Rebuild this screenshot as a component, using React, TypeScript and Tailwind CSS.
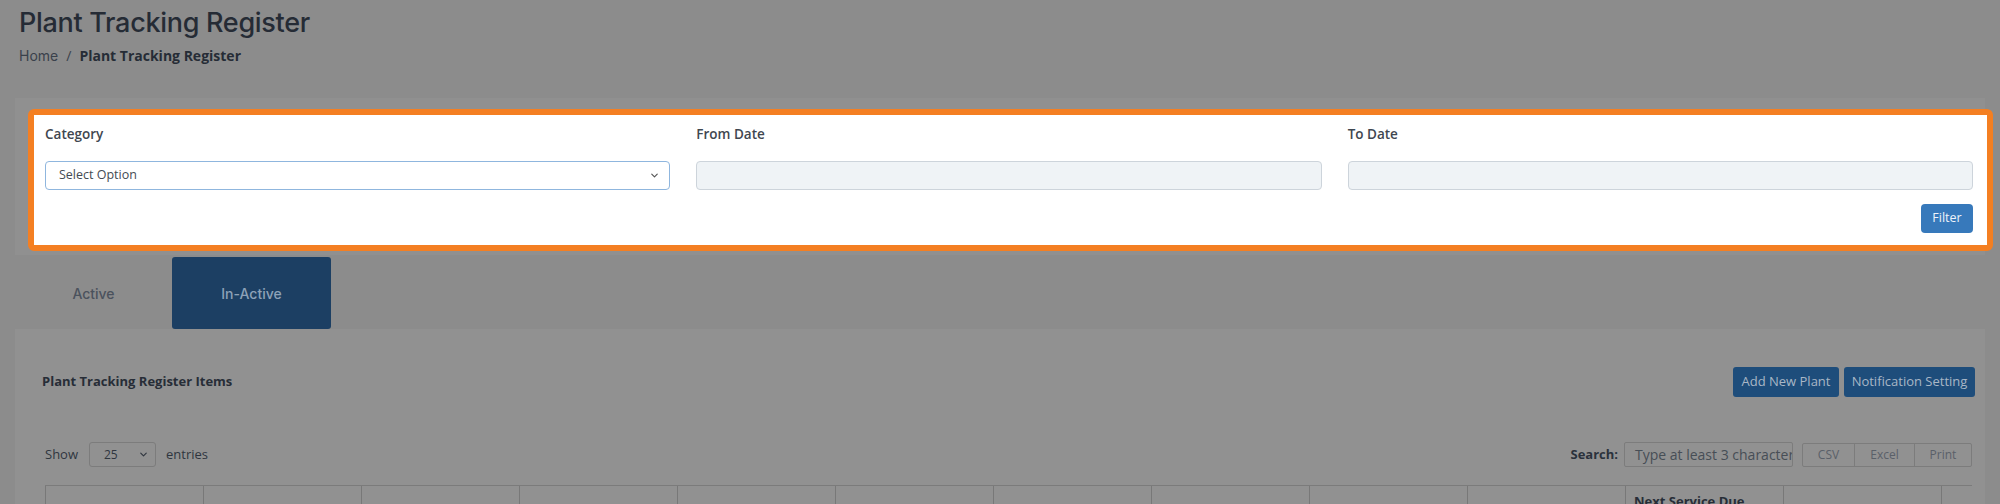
import { ChevronDown } from 'lucide-react'

const columns = ['', '', '', '', '', '', '', '', '', '', 'Next Service Due', '', '']

const FilterField = ({ label, children }: { label: string; children: React.ReactNode }) => (
  <div className="flex flex-col gap-[18px]">
    <label className="text-[13.5px] leading-[18px] font-semibold text-[#3f4750]">{label}</label>
    {children}
  </div>
)

const App = () => {
  return (
    <div className="w-full h-[504px] overflow-hidden bg-[#8c8c8c] font-['Open_Sans',sans-serif]">
      {/* page header */}
      <div className="pl-[19px] pt-[7px]">
        <h1 className="font-['Inter',sans-serif] text-[27px] leading-[32px] font-medium tracking-[-0.3px] text-[#252b35]">
          Plant Tracking Register
        </h1>
        <div className="mt-[8px] flex items-center text-[14px] leading-[18px] text-[#2e343d]">
          <span className="font-['Inter',sans-serif] text-[#3a414b]">Home</span>
          <span className="mx-[8px] text-[#3a414b]">/</span>
          <span className="font-bold text-[#262c36]">Plant Tracking Register</span>
        </div>
      </div>

      {/* filter card (highlighted) */}
      <div className="mt-[33px] ml-[15px] mr-[15px] bg-[#909090] pt-[11px] pb-[4px] pl-[13px]">
        <div className="mr-[-8px] border-[6px] border-[#f47f22] rounded-[6px] bg-white pt-[10px] pb-[12px] pl-[11px] pr-[14px]">
          <div className="grid grid-cols-3 gap-[26px]">
            <FilterField label="Category">
              <div className="h-[29px] flex items-center justify-between rounded-[4px] border border-[#8fb6de] pl-[13px] pr-[9px] text-[12.5px] text-[#444b53]">
                <span>Select Option</span>
                <ChevronDown size={11} strokeWidth={2.5} className="text-[#555]" />
              </div>
            </FilterField>
            <FilterField label="From Date">
              <div className="h-[29px] rounded-[4px] border border-[#cdd4db] bg-[#eff3f6]" />
            </FilterField>
            <FilterField label="To Date">
              <div className="h-[29px] rounded-[4px] border border-[#cdd4db] bg-[#eff3f6]" />
            </FilterField>
          </div>
          <div className="mt-[14px] flex justify-end">
            <button className="h-[29px] w-[52px] rounded-[4px] bg-[#3779bb] text-[12.5px] text-[#eef4fa]">Filter</button>
          </div>
        </div>
      </div>

      {/* tabs */}
      <div className="mt-[2px] ml-[15px] flex h-[72px] font-['Inter',sans-serif] text-[14px] font-medium">
        <div className="w-[157px] flex items-center justify-center text-[#4b525d]">Active</div>
        <div className="w-[159px] flex items-center justify-center rounded-[3px] bg-[#1c3f63] text-[#8da2b8]">In-Active</div>
      </div>

      {/* table card */}
      <div className="mx-[15px] bg-[#919191] pt-[38px]">
        <div className="flex items-center justify-between pl-[27px] pr-[10px] h-[30px]">
          <div className="text-[13px] font-bold text-[#272d37]">Plant Tracking Register Items</div>
          <div className="flex gap-[5px] text-[13px]">
            <button className="h-[30px] w-[106px] rounded-[3px] bg-[#1e4d7b] text-[#a9b7c6]">Add New Plant</button>
            <button className="h-[30px] w-[131px] rounded-[3px] bg-[#1e4d7b] text-[#a9b7c6]">Notification Setting</button>
          </div>
        </div>

        <div className="mt-[45px] flex items-center justify-between pl-[30px] pr-[13px] text-[13px] text-[#2f363f]">
          <div className="flex items-center">
            <span>Show</span>
            <div className="ml-[11px] h-[25px] w-[67px] flex items-center justify-between rounded-[3px] border border-[#7c7c7c] pl-[14px] pr-[6px] text-[12px]">
              <span>25</span>
              <ChevronDown size={11} strokeWidth={2.5} />
            </div>
            <span className="ml-[10px]">entries</span>
          </div>
          <div className="flex items-center">
            <span className="font-bold text-[#2b323c]">Search:</span>
            <div className="ml-[6px] h-[25px] w-[169px] overflow-hidden whitespace-nowrap flex items-center rounded-[2px] border border-[#7c7c7c] pl-[10px] text-[14px] text-[#474e56]">
              Type at least 3 characters
            </div>
            <div className="ml-[9px] flex h-[24px] rounded-[2px] border border-[#7c7c7c] text-[12px] text-[#5a6069]">
              <div className="w-[52px] flex items-center justify-center border-r border-[#7c7c7c]">CSV</div>
              <div className="w-[60px] flex items-center justify-center border-r border-[#7c7c7c]">Excel</div>
              <div className="w-[56px] flex items-center justify-center">Print</div>
            </div>
          </div>
        </div>

        <div className="mt-[18px] ml-[30px] w-[1927px] overflow-hidden">
          <div className="flex border-t border-[#7b7b7b]">
            {columns.map((c, i) => (
              <div
                key={i}
                className="w-[158px] shrink-0 h-[40px] border-l border-[#787878] px-[8px] pt-[6px] text-[13px] font-bold text-[#272d37]"
              >
                {c}
              </div>
            ))}
          </div>
        </div>
      </div>
    </div>
  )
}

export default App
